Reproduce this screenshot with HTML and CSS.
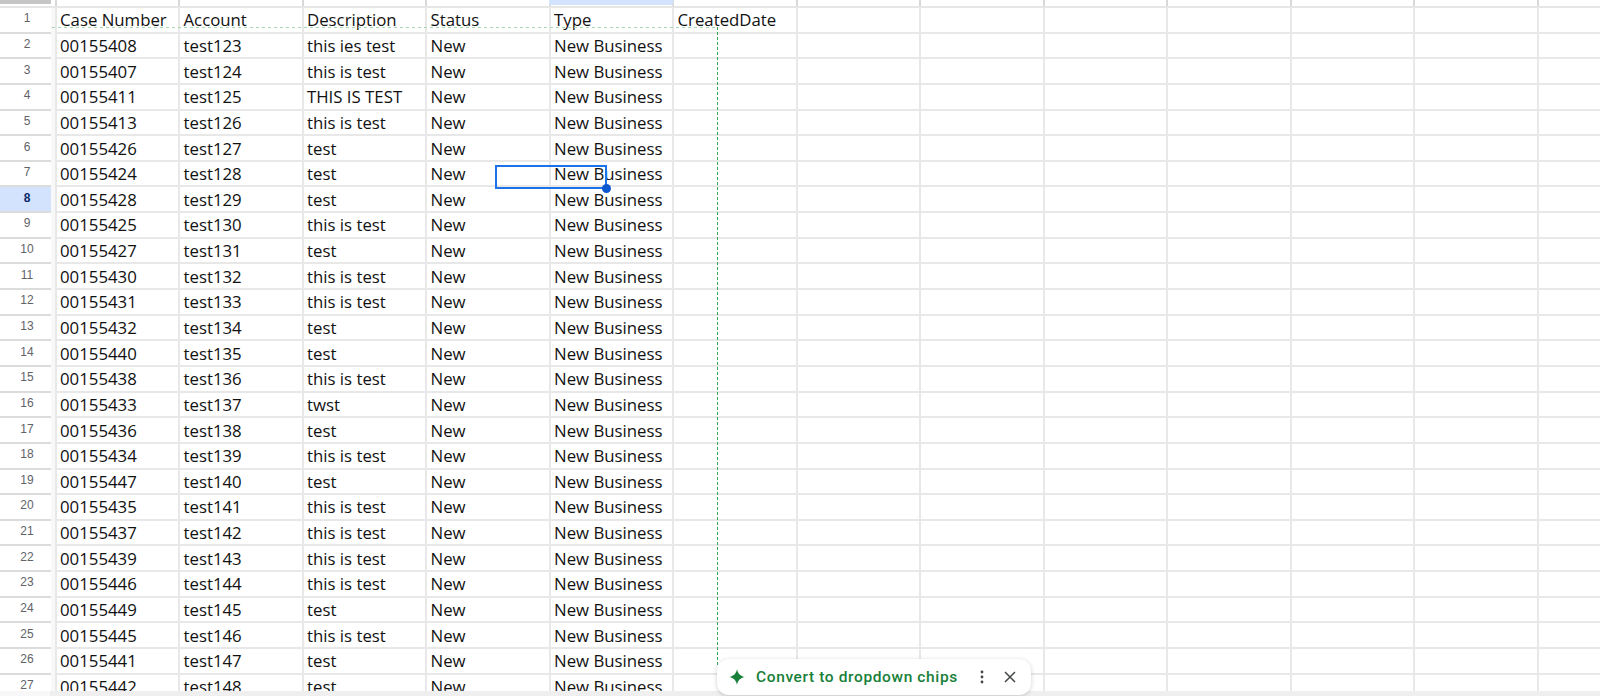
FILE: index.html
```html
<!DOCTYPE html>
<html lang="en">
<head>
<meta charset="utf-8">
<title>Cases - Sheet</title>
<link rel="stylesheet" href="styles.css">
</head>
<body>
<div class="app">
  <div class="colbar">
    <div class="corner"></div>
    <div class="colheads">
      <div class="ch"></div><div class="ch"></div><div class="ch"></div><div class="ch"></div>
      <div class="ch sel"></div>
    </div>
  </div>
  <div class="sheet">
    <div class="rownums">
      <div class="rn">1</div><div class="rn">2</div><div class="rn">3</div><div class="rn">4</div><div class="rn">5</div><div class="rn">6</div><div class="rn">7</div>
      <div class="rn on">8</div>
      <div class="rn">9</div><div class="rn">10</div><div class="rn">11</div><div class="rn">12</div><div class="rn">13</div><div class="rn">14</div><div class="rn">15</div><div class="rn">16</div><div class="rn">17</div><div class="rn">18</div><div class="rn">19</div><div class="rn">20</div><div class="rn">21</div><div class="rn">22</div><div class="rn">23</div><div class="rn">24</div><div class="rn">25</div><div class="rn">26</div><div class="rn">27</div>
    </div>
    <div class="grid">
      <div class="r"><span>Case Number</span><span>Account</span><span>Description</span><span>Status</span><span>Type</span><span>CreatedDate</span></div>
      <div class="r"><span>00155408</span><span>test123</span><span>this ies test</span><span>New</span><span>New Business</span></div>
      <div class="r"><span>00155407</span><span>test124</span><span>this is test</span><span>New</span><span>New Business</span></div>
      <div class="r"><span>00155411</span><span>test125</span><span>THIS IS TEST</span><span>New</span><span>New Business</span></div>
      <div class="r"><span>00155413</span><span>test126</span><span>this is test</span><span>New</span><span>New Business</span></div>
      <div class="r"><span>00155426</span><span>test127</span><span>test</span><span>New</span><span>New Business</span></div>
      <div class="r"><span>00155424</span><span>test128</span><span>test</span><span>New</span><span>New Business</span></div>
      <div class="r"><span>00155428</span><span>test129</span><span>test</span><span>New</span><span>New Business</span></div>
      <div class="r"><span>00155425</span><span>test130</span><span>this is test</span><span>New</span><span>New Business</span></div>
      <div class="r"><span>00155427</span><span>test131</span><span>test</span><span>New</span><span>New Business</span></div>
      <div class="r"><span>00155430</span><span>test132</span><span>this is test</span><span>New</span><span>New Business</span></div>
      <div class="r"><span>00155431</span><span>test133</span><span>this is test</span><span>New</span><span>New Business</span></div>
      <div class="r"><span>00155432</span><span>test134</span><span>test</span><span>New</span><span>New Business</span></div>
      <div class="r"><span>00155440</span><span>test135</span><span>test</span><span>New</span><span>New Business</span></div>
      <div class="r"><span>00155438</span><span>test136</span><span>this is test</span><span>New</span><span>New Business</span></div>
      <div class="r"><span>00155433</span><span>test137</span><span>twst</span><span>New</span><span>New Business</span></div>
      <div class="r"><span>00155436</span><span>test138</span><span>test</span><span>New</span><span>New Business</span></div>
      <div class="r"><span>00155434</span><span>test139</span><span>this is test</span><span>New</span><span>New Business</span></div>
      <div class="r"><span>00155447</span><span>test140</span><span>test</span><span>New</span><span>New Business</span></div>
      <div class="r"><span>00155435</span><span>test141</span><span>this is test</span><span>New</span><span>New Business</span></div>
      <div class="r"><span>00155437</span><span>test142</span><span>this is test</span><span>New</span><span>New Business</span></div>
      <div class="r"><span>00155439</span><span>test143</span><span>this is test</span><span>New</span><span>New Business</span></div>
      <div class="r"><span>00155446</span><span>test144</span><span>this is test</span><span>New</span><span>New Business</span></div>
      <div class="r"><span>00155449</span><span>test145</span><span>test</span><span>New</span><span>New Business</span></div>
      <div class="r"><span>00155445</span><span>test146</span><span>this is test</span><span>New</span><span>New Business</span></div>
      <div class="r"><span>00155441</span><span>test147</span><span>test</span><span>New</span><span>New Business</span></div>
      <div class="r"><span>00155442</span><span>test148</span><span>test</span><span>New</span><span>New Business</span></div>
    </div>
  </div>
  <div class="scrollbar"></div>
  <div class="dash-h"></div>
  <div class="dash-v"></div>
  <div class="cursor"><i class="handle"></i></div>
  <div class="toast">
    <svg class="spark" viewBox="0 0 16 16" width="16" height="16"><path d="M8 0C8.7 4.6 11.4 7.3 16 8 11.4 8.7 8.7 11.4 8 16 7.3 11.4 4.6 8.7 0 8 4.6 7.3 7.3 4.6 8 0Z"/></svg>
    <span class="toast-text">Convert to dropdown chips</span>
    <svg class="more" viewBox="0 0 4 14" width="4" height="14"><circle cx="2" cy="2" r="1.4"/><circle cx="2" cy="7" r="1.4"/><circle cx="2" cy="12" r="1.4"/></svg>
    <svg class="close" viewBox="0 0 12 12" width="12" height="12"><path d="M1 1L11 11M11 1L1 11"/></svg>
  </div>
</div>
</body>
</html>
```
FILE: styles.css
```css
* { box-sizing: border-box; }
html, body { margin: 0; height: 100%; background: #fff; }
.app {
  position: relative;
  width: 1600px;
  height: 696px;
  overflow: hidden;
  display: flex;
  flex-direction: column;
  font-family: "Open Sans", "Noto Sans", sans-serif;
}
.colbar {
  display: flex;
  height: 8px;
  flex: none;
  border-bottom: 2px solid #e6e6e6;
}
.corner {
  width: 51px;
  height: 4px;
  background: #c6c6c6;
  flex: none;
}
.colheads {
  flex: 1;
  margin-left: 4px;
  display: flex;
  background-image: repeating-linear-gradient(to right, #d8d8d8 0, #d8d8d8 2px, transparent 2px, transparent 123.5px);
}
.ch { width: 123.5px; flex: none; }
.ch.sel { height: 5px; background: #d3e3fd; }
.sheet { display: flex; flex: none; height: 683px; }
.rownums {
  width: 55px;
  flex: none;
  background: #f8f8f8;
}
.rn {
  width: 51px;
  height: 25.65px;
  display: flex;
  align-items: center;
  justify-content: center;
  padding: 0 0 3px 3px;
  background: #fff;
  border-bottom: 2px solid #dcdcdc;
  font: 12px "Liberation Sans", Arial, sans-serif;
  color: #5f6368;
}
.rn.on {
  background: #d3e3fd;
  color: #0b2a6b;
  font-weight: 700;
}
.grid {
  flex: 1;
  background-image: repeating-linear-gradient(to right, #e8e8e8 0, #e8e8e8 2px, transparent 2px, transparent 123.5px);
}
.r {
  display: grid;
  grid-template-columns: repeat(6, 123.5px);
  align-items: center;
  height: 25.65px;
  padding: 1px 0 0 5px;
  border-bottom: 2px solid #e8e8e8;
  font-size: 16.8px;
  line-height: 20px;
  color: #111;
  white-space: nowrap;
}
.scrollbar {
  position: absolute;
  left: 0;
  right: 0;
  bottom: 0;
  height: 5px;
  background: #efefef;
  border-left: 50px solid #f8f8f8;
}
.dash-h {
  position: absolute;
  left: 52px;
  top: 27px;
  width: 665px;
  height: 1px;
  background-image: repeating-linear-gradient(to right, #a6d8b4 0, #a6d8b4 3px, transparent 3px, transparent 6px);
}
.dash-v {
  position: absolute;
  left: 717px;
  top: 27px;
  width: 1px;
  height: 640px;
  background-image: repeating-linear-gradient(to bottom, #34a853 0, #34a853 3px, transparent 3px, transparent 5px);
}
.cursor {
  position: absolute;
  left: 495px;
  top: 165px;
  width: 112px;
  height: 24px;
  border: 2px solid #1a73e8;
}
.handle {
  position: absolute;
  right: -6px;
  bottom: -6px;
  width: 9px;
  height: 9px;
  border-radius: 50%;
  background: #0b57d0;
}
.toast {
  position: absolute;
  left: 717px;
  top: 659px;
  width: 314px;
  height: 36px;
  display: flex;
  align-items: center;
  padding-left: 12px;
  background: #fff;
  border-radius: 12px;
  box-shadow: 0 1px 4px rgba(60, 64, 67, .25);
}
.spark { fill: #188038; flex: none; }
.toast-text {
  margin-left: 11px;
  width: 224px;
  font: 500 15.5px Roboto, sans-serif;
  letter-spacing: .62px;
  color: #188038;
  white-space: nowrap;
}
.more { fill: #444746; flex: none; }
.close {
  margin-left: 20px;
  fill: none;
  stroke: #444746;
  stroke-width: 1.5;
  flex: none;
}
```
